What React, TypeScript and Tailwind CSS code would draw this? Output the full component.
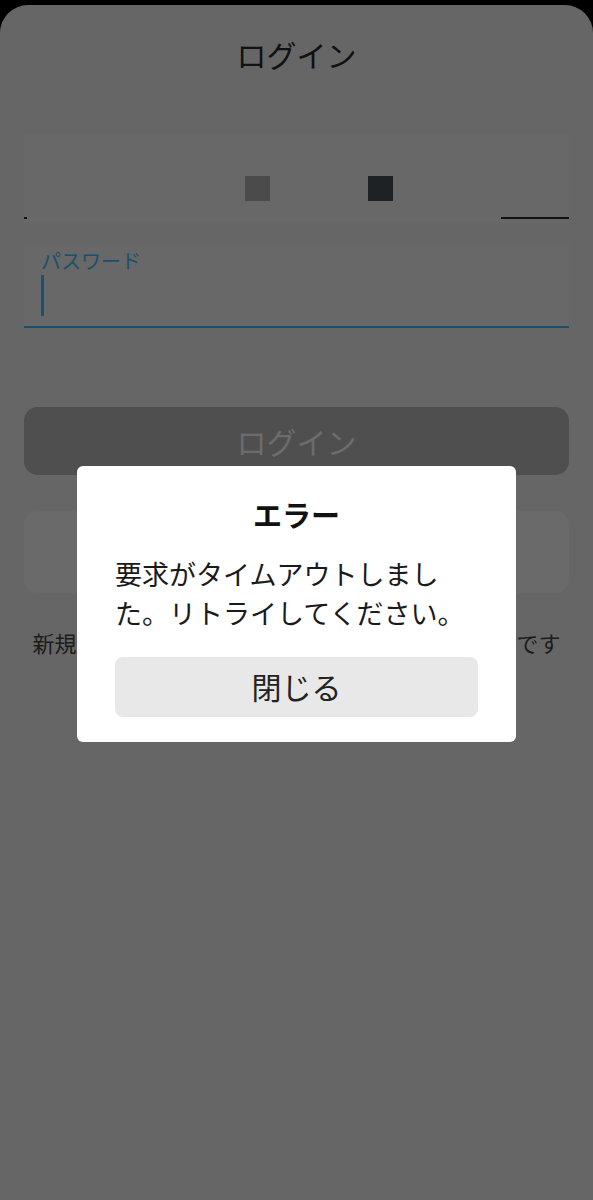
import React from "react";

export default function App() {
  const font = { fontFamily: '"Noto Sans CJK JP", "Noto Sans", sans-serif' };
  return (
    <div className="relative h-[1200px] w-full bg-black pt-[5px]" style={font}>
      <div className="flex h-full flex-col rounded-t-[28px] bg-[#666666] px-[24px]">
        <div className="mt-[27px] text-center text-[30px] font-normal leading-[44px] text-[#111111]">
          ログイン
        </div>

        <div className="mt-[59px] flex h-[88px] flex-col bg-[#686868]">
          <div className="flex gap-[98px] pl-[221px] pt-[41px]">
            <div className="h-[25px] w-[25px] bg-[#4b4b4c]" />
            <div className="h-[25px] w-[25px] bg-[#1f2224]" />
          </div>
          <div className="mt-auto mb-[4px] flex items-center justify-between">
            <div className="h-[2px] w-[3px] bg-[#111]" />
            <div className="h-[2px] w-[68px] bg-[#111]" />
          </div>
        </div>

        <div className="mt-[20px] box-border flex h-[85px] flex-col border-b-2 border-[#1a526d] bg-[#686868] pl-[17px] pt-[6px]">
          <div className="text-[20px] leading-[24px] text-[#1a506b]">パスワード</div>
          <div className="mt-[2px] h-[41px] w-[3px] bg-[#1a526d]" />
        </div>

        <div className="mt-[79px] flex h-[68px] items-center justify-center rounded-[14px] bg-[#4f4f4f] text-[30px] font-normal text-[#6c6c6c]">
          ログイン
        </div>

        <div className="mt-[36px] h-[82px] rounded-[14px] bg-[#6a6a6a]" />

        <div className="mt-[33px] whitespace-nowrap text-center text-[22px] leading-[33px] text-[#1c1c1c]">
          新規登録の方はこちらからアカウント作成が必要です
        </div>
      </div>

      <div className="fixed inset-0 flex items-center justify-center pt-[7px]">
        <div className="w-[439px] rounded-[6px] bg-white px-[38px] pt-[27px] pb-[25px]">
          <div className="text-center text-[29px] font-bold leading-[43px] text-[#111111]">エラー</div>
          <p className="mt-[18px] pr-[4px] text-[27px] leading-[39px] text-[#1a1a1a]">
            要求がタイムアウトしました。リトライしてください。
          </p>
          <div className="mt-[25px] flex h-[60px] w-full items-center justify-center rounded-[8px] bg-[#e8e8e8] text-[30px] text-[#222222]">
            閉じる
          </div>
        </div>
      </div>
    </div>
  );
}
